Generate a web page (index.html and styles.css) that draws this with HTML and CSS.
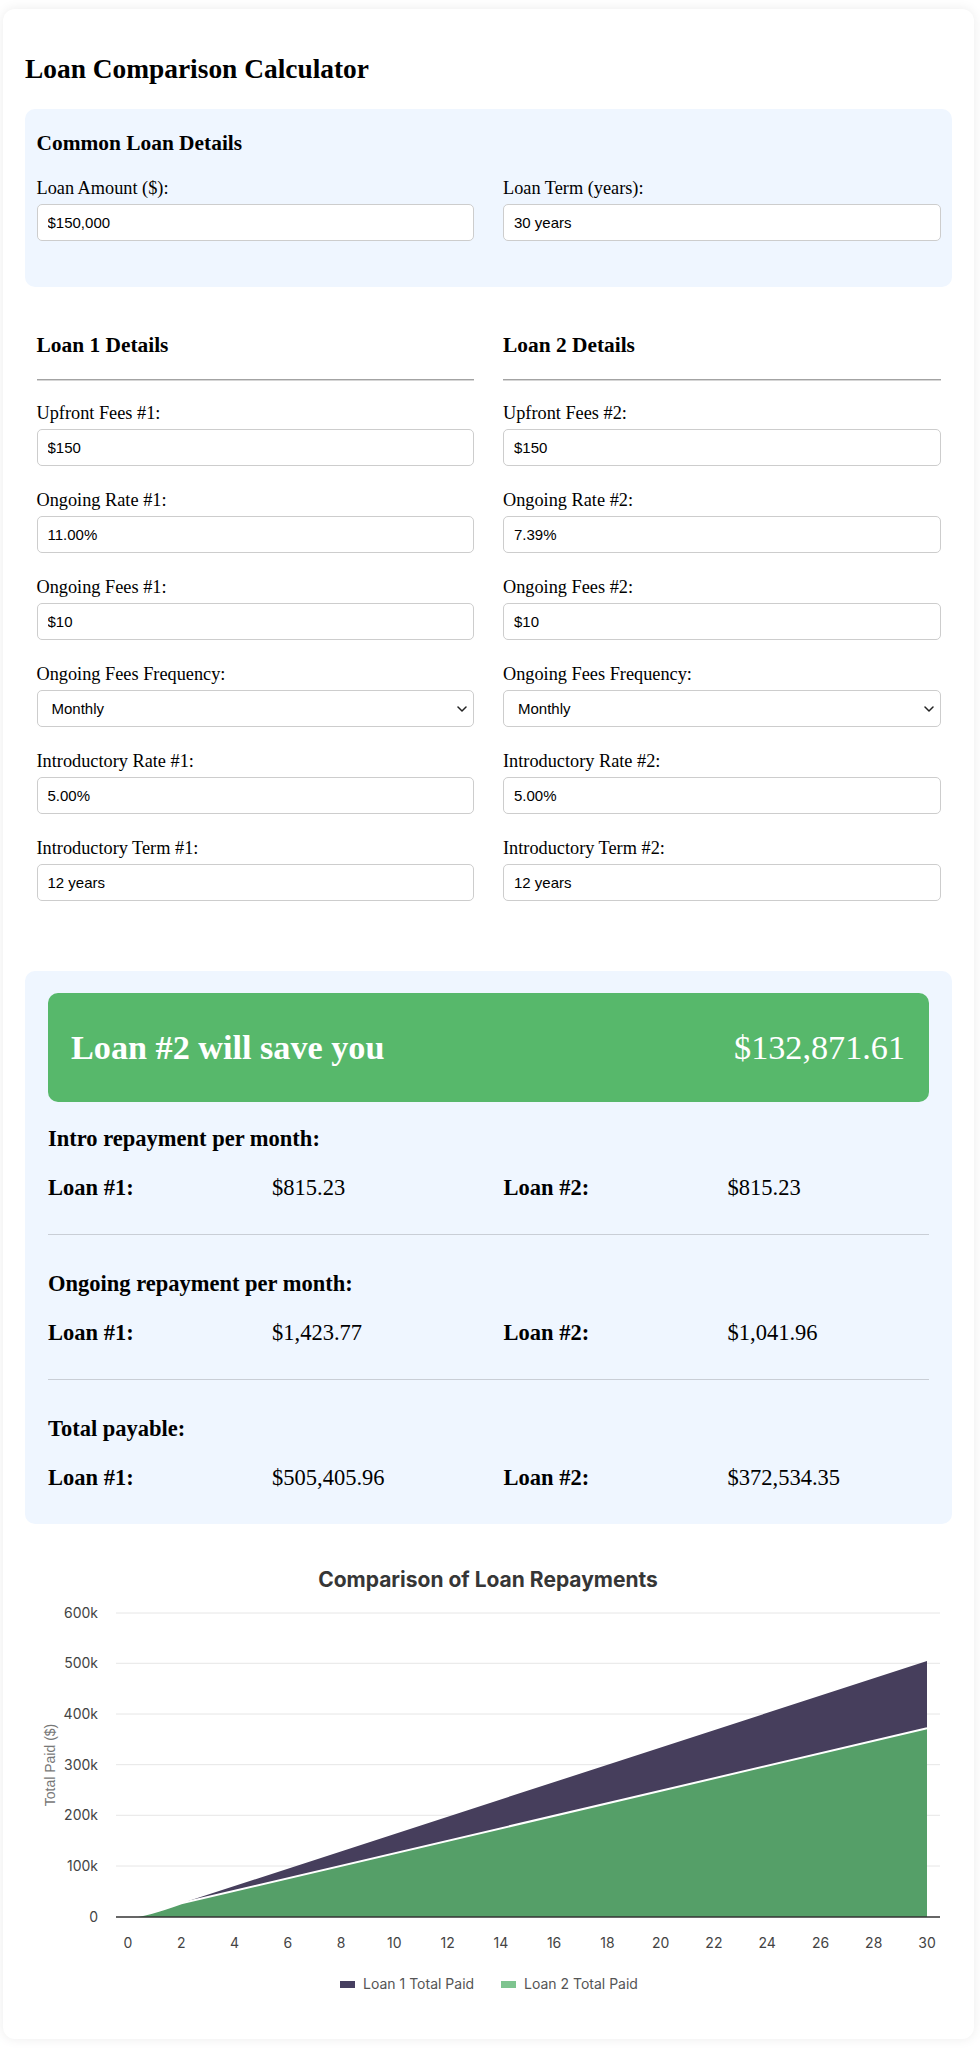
FILE: index.html
```html
<!DOCTYPE html>
<html lang="en">
<head>
<meta charset="utf-8">
<title>Loan Comparison Calculator</title>
<link rel="stylesheet" href="styles.css">
</head>
<body>
<div class="card">
  <h1 class="title">Loan Comparison Calculator</h1>

  <section class="panel common">
    <h3 class="panel-title">Common Loan Details</h3>
    <div class="cols">
      <div class="field"><label class="field-label">Loan Amount ($):</label><input class="input" type="text" value="$150,000"></div>
      <div class="field"><label class="field-label">Loan Term (years):</label><input class="input" type="text" value="30 years"></div>
    </div>
  </section>

  <section class="loans cols">
    <div class="loan">
      <h3 class="loan-title">Loan 1 Details</h3>
      <hr class="rule">
      <div class="field"><label class="field-label">Upfront Fees #1:</label><input class="input" type="text" value="$150"></div>
      <div class="field"><label class="field-label">Ongoing Rate #1:</label><input class="input" type="text" value="11.00%"></div>
      <div class="field"><label class="field-label">Ongoing Fees #1:</label><input class="input" type="text" value="$10"></div>
      <div class="field"><label class="field-label">Ongoing Fees Frequency:</label>
        <div class="select-wrap"><select class="select"><option>Monthly</option></select>
          <svg class="chevron" width="10" height="6" viewBox="0 0 10 6"><path d="M1 1l4 4 4-4" fill="none" stroke="#222" stroke-width="1.5" stroke-linecap="round" stroke-linejoin="round"/></svg></div></div>
      <div class="field"><label class="field-label">Introductory Rate #1:</label><input class="input" type="text" value="5.00%"></div>
      <div class="field"><label class="field-label">Introductory Term #1:</label><input class="input" type="text" value="12 years"></div>
    </div>
    <div class="loan">
      <h3 class="loan-title">Loan 2 Details</h3>
      <hr class="rule">
      <div class="field"><label class="field-label">Upfront Fees #2:</label><input class="input" type="text" value="$150"></div>
      <div class="field"><label class="field-label">Ongoing Rate #2:</label><input class="input" type="text" value="7.39%"></div>
      <div class="field"><label class="field-label">Ongoing Fees #2:</label><input class="input" type="text" value="$10"></div>
      <div class="field"><label class="field-label">Ongoing Fees Frequency:</label>
        <div class="select-wrap"><select class="select"><option>Monthly</option></select>
          <svg class="chevron" width="10" height="6" viewBox="0 0 10 6"><path d="M1 1l4 4 4-4" fill="none" stroke="#222" stroke-width="1.5" stroke-linecap="round" stroke-linejoin="round"/></svg></div></div>
      <div class="field"><label class="field-label">Introductory Rate #2:</label><input class="input" type="text" value="5.00%"></div>
      <div class="field"><label class="field-label">Introductory Term #2:</label><input class="input" type="text" value="12 years"></div>
    </div>
  </section>

  <section class="panel results">
    <div class="banner">
      <span class="banner-label">Loan #2 will save you</span>
      <span class="banner-value">$132,871.61</span>
    </div>

    <div class="res-group">
      <h4 class="res-heading">Intro repayment per month:</h4>
      <div class="res-row">
        <div class="res-cell"><span class="res-label">Loan #1:</span><span class="res-value">$815.23</span></div>
        <div class="res-cell"><span class="res-label">Loan #2:</span><span class="res-value">$815.23</span></div>
      </div>
    </div>
    <hr class="res-sep">
    <div class="res-group">
      <h4 class="res-heading">Ongoing repayment per month:</h4>
      <div class="res-row">
        <div class="res-cell"><span class="res-label">Loan #1:</span><span class="res-value">$1,423.77</span></div>
        <div class="res-cell"><span class="res-label">Loan #2:</span><span class="res-value">$1,041.96</span></div>
      </div>
    </div>
    <hr class="res-sep">
    <div class="res-group">
      <h4 class="res-heading">Total payable:</h4>
      <div class="res-row">
        <div class="res-cell"><span class="res-label">Loan #1:</span><span class="res-value">$505,405.96</span></div>
        <div class="res-cell"><span class="res-label">Loan #2:</span><span class="res-value">$372,534.35</span></div>
      </div>
    </div>
  </section>

  <svg class="chart" width="927" height="492" viewBox="0 0 927 492">
    <text class="chart-title" x="463" y="63" text-anchor="middle">Comparison of Loan Repayments</text>
    <g class="grid">
      <line x1="91" x2="915" y1="89" y2="89"/>
      <line x1="91" x2="915" y1="139.3" y2="139.3"/>
      <line x1="91" x2="915" y1="190" y2="190"/>
      <line x1="91" x2="915" y1="240.7" y2="240.7"/>
      <line x1="91" x2="915" y1="291.3" y2="291.3"/>
      <line x1="91" x2="915" y1="342" y2="342"/>
    </g>
    <g class="tick" text-anchor="end">
      <text x="73" y="94">600k</text>
      <text x="73" y="144.3">500k</text>
      <text x="73" y="195">400k</text>
      <text x="73" y="245.7">300k</text>
      <text x="73" y="296.3">200k</text>
      <text x="73" y="347">100k</text>
      <text x="73" y="398">0</text>
    </g>
    <text class="axis-title" x="25" y="246" text-anchor="middle" transform="rotate(-90 25 241)">Total Paid ($)</text>
    <path class="area-1" d="M103,393 L105,393 C114,392.3 128,389.5 156.3,379.3 L902,136.9 L902,393 Z"/>
    <path class="area-2" d="M103,393 L105,393 C114,392.3 128,389.5 156.3,379.3 L902,204.3 L902,393 Z"/>
    <path class="area-2-line" d="M105,393 C114,392.3 128,389.5 156.3,379.3 L902,204.3"/>
    <line class="axis-line" x1="91" x2="915" y1="393" y2="393"/>
    <g class="tick" text-anchor="middle">
      <text x="103" y="424">0</text>
      <text x="156.3" y="424">2</text>
      <text x="209.5" y="424">4</text>
      <text x="262.8" y="424">6</text>
      <text x="316.1" y="424">8</text>
      <text x="369.3" y="424">10</text>
      <text x="422.6" y="424">12</text>
      <text x="475.9" y="424">14</text>
      <text x="529.1" y="424">16</text>
      <text x="582.4" y="424">18</text>
      <text x="635.7" y="424">20</text>
      <text x="688.9" y="424">22</text>
      <text x="742.2" y="424">24</text>
      <text x="795.5" y="424">26</text>
      <text x="848.7" y="424">28</text>
      <text x="902" y="424">30</text>
    </g>
    <rect class="legend-1" x="315" y="457" width="15" height="7"/>
    <text class="legend-text" x="338" y="464.5">Loan 1 Total Paid</text>
    <rect class="legend-2" x="476" y="457" width="15" height="7"/>
    <text class="legend-text" x="499" y="464.5">Loan 2 Total Paid</text>
  </svg>
</div>
</body>
</html>
```
FILE: styles.css
```css
html, body {
  margin: 0;
  padding: 0;
  background: #ffffff;
}
body {
  font-family: "Liberation Serif", "Times New Roman", serif;
  font-size: 18.3px;
  color: #000;
}
.card {
  margin: 9px 6px 9px 3px;
  padding: 22px 22px 23px;
  background: #fff;
  border-radius: 12px;
  box-shadow: 0 0 12px rgba(0, 0, 0, 0.08);
}
.title {
  font-size: 27.4px;
  line-height: 31px;
  font-weight: bold;
  margin: 23px 0 24px;
}
.panel {
  background: #eff6ff;
  border-radius: 10px;
}
.common {
  padding: 22px 11.5px 22px;
}
.panel-title,
.loan-title {
  font-size: 21.4px;
  line-height: 24px;
  font-weight: bold;
  margin: 0 0 23px;
}
.cols {
  display: grid;
  grid-template-columns: 1fr 1fr;
  column-gap: 29px;
}
.field {
  margin-bottom: 24px;
}
.field-label {
  display: block;
  font-size: 18.3px;
  line-height: 20px;
  margin-bottom: 6px;
}
.input,
.select {
  display: block;
  box-sizing: border-box;
  width: 100%;
  height: 37px;
  margin: 0;
  border: 1px solid #cdcdcd;
  border-radius: 5px;
  background: #fff;
  font-family: "Liberation Sans", Arial, sans-serif;
  font-size: 15px;
  color: #000;
  padding: 0 10px;
  outline: none;
}
.select-wrap {
  position: relative;
}
.select {
  appearance: none;
  -webkit-appearance: none;
  padding-left: 14px;
}
.chevron {
  position: absolute;
  right: 7px;
  top: 16px;
  pointer-events: none;
}
.loans {
  margin: 46px 0 46px;
  padding: 0 11.5px;
}
.loan-title {
  margin: 0;
}
.rule {
  margin: 22px 0;
  height: 0;
  border: 0;
  border-top: 1px solid #a3a3a3;
  border-bottom: 1px solid #d6d6d6;
}
.results {
  padding: 22px 23px 34px;
}
.banner {
  display: flex;
  align-items: center;
  justify-content: space-between;
  height: 109px;
  padding: 0 24px 0 23px;
  background: #57b86b;
  border-radius: 10px;
  color: #fff;
  font-size: 34.2px;
  line-height: 38px;
}
.banner-label {
  font-weight: bold;
}
.res-heading {
  margin: 24px 0 0;
  font-size: 22.5px;
  line-height: 25px;
  font-weight: bold;
}
.res-row {
  display: grid;
  grid-template-columns: 1fr 1fr;
  column-gap: 30px;
  margin-top: 24px;
  font-size: 22.5px;
  line-height: 25px;
}
.res-cell {
  display: flex;
}
.res-label {
  width: 224px;
  font-weight: bold;
}
.res-sep {
  margin: 34px 0 36px;
  height: 0;
  border: 0;
  border-top: 1px solid #c9ced6;
}
.chart {
  display: block;
}
.chart-title {
  font-family: Inter, "Liberation Sans", sans-serif;
  font-weight: bold;
  font-size: 21px;
  fill: #363636;
}
.grid line {
  stroke: #e6e6e6;
  stroke-width: 1;
}
.tick text {
  font-family: Inter, "Liberation Sans", sans-serif;
  font-size: 14px;
  fill: #444;
}
.axis-title {
  font-family: "Liberation Sans", Arial, sans-serif;
  font-size: 14px;
  fill: #777;
}
.area-1 {
  fill: #463e5c;
}
.area-2 {
  fill: #559f68;
}
.area-2-line {
  fill: none;
  stroke: #fff;
  stroke-width: 2;
}
.axis-line {
  stroke: #333;
  stroke-width: 1.5;
}
.legend-1 {
  fill: #463f60;
}
.legend-2 {
  fill: #7ec48f;
}
.legend-text {
  font-family: Inter, "Liberation Sans", sans-serif;
  font-size: 14px;
  fill: #555;
}
```
